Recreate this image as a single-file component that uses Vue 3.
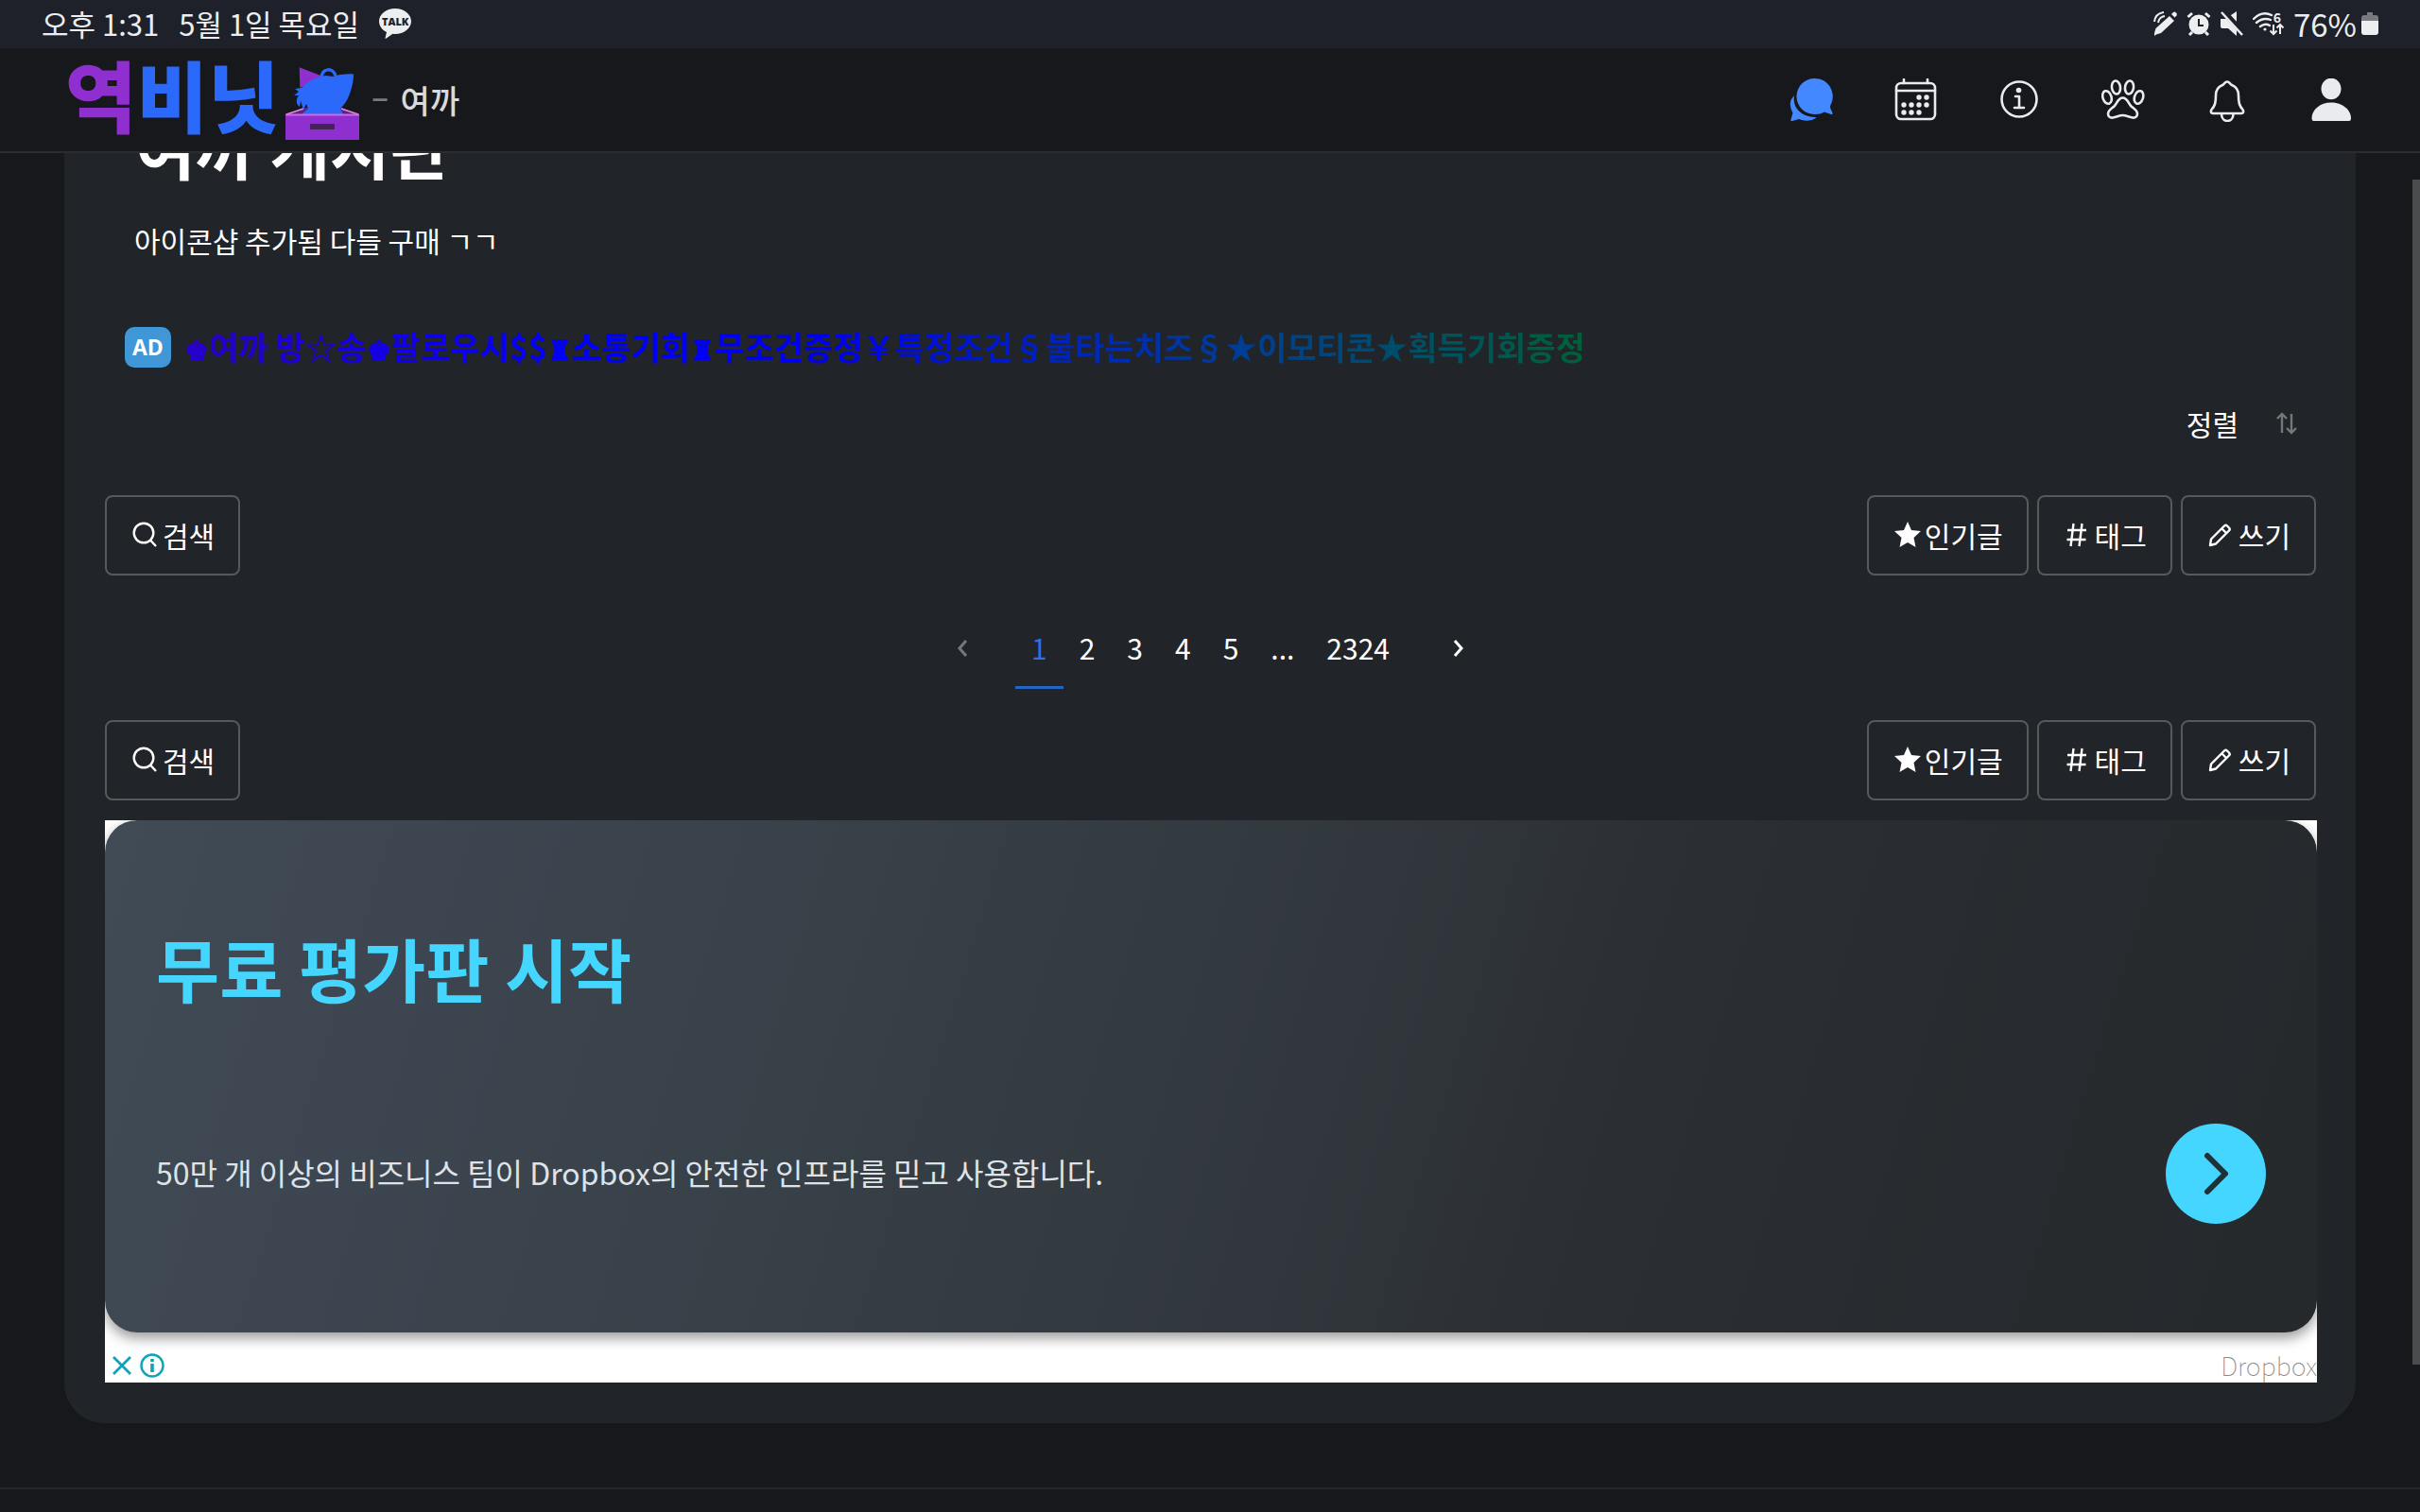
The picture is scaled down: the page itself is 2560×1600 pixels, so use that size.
<template>
  <div class="page">
    <div class="status-bar">
      <div class="status-left">
        <span>오후 1:31</span>
        <span>5월 1일 목요일</span>
        <span class="talk">
          <svg viewBox="0 0 34 32" width="34" height="32">
            <path fill="#eceef0" d="M17 0C7.600 0 0 6 0 13.500c0 5 3.300 9.200 8 11.500l-1.500 6.300c-.1.500.4.800.8.500l7.200-5c.8.100 1.700.200 2.500.200 9.400 0 17-6 17-13.500S26.400 0 17 0z" />
          </svg>
          <span class="talk-text">TALK</span>
        </span>
      </div>
      <div class="status-right">
        <svg viewBox="0 0 26 26" width="26" height="26" fill="#eceef0">
          <path d="M17 5l5 5L8 23l-5 1.500L1 26l0-3 1.500-5z" />
          <path d="M19 3l2-2q1.500-1 3 .5t.5 3l-2 2z" />
          <path d="M1 11Q2 2 11 1M5 12Q6 6 12 5" fill="none" stroke="#eceef0" stroke-width="2" />
        </svg>
        <svg viewBox="0 0 26 26" width="26" height="26">
          <circle cx="13" cy="14" r="10.500" fill="#eceef0" />
          <path d="M1.500 6L6 2M24.500 6L20 2M6 22l-3 3M20 22l3 3" stroke="#eceef0" stroke-width="3" />
          <path d="M13 8v7h5" fill="none" stroke="#1e2129" stroke-width="2" />
        </svg>
        <svg viewBox="0 0 26 26" width="26" height="26">
          <path d="M1 8h5l12-8v26l-9-8H3q-2 0-2-2z" fill="#eceef0" />
          <path d="M3-1l23 25" stroke="#1e2129" stroke-width="6" />
          <path d="M2 1l22 24" stroke="#eceef0" stroke-width="2.500" />
        </svg>
        <span class="wifi">
          <svg viewBox="0 0 34 26" width="34" height="26" fill="none" stroke="#eceef0" stroke-width="2.400">
            <path d="M1 8Q10-1 20 4M4 12q7-6 15-3M8 16q5-4 10-1" stroke-linecap="round" />
            <circle cx="13" cy="19" r="1.600" fill="#eceef0" stroke="none" />
            <path d="M22 14v10M18.500 20.500L22 24l3.500-3.500M29 24V14M25.500 17.500L29 14l3.500 3.500" stroke-width="2" />
          </svg>
          <span class="wifi-gen">6</span>
        </span>
        <span class="battery-text">76%</span>
        <svg viewBox="0 0 18 26" width="18" height="26">
          <path d="M6 1h6v3h3q3 0 3 3v3H0V7q0-3 3-3h3z" fill="#777a7f" />
          <path d="M0 10h18v12q0 3-3 3H3q-3 0-3-3z" fill="#eceef0" />
        </svg>
      </div>
    </div>

    <header class="header">
      <a class="logo" href="#" aria-label="역비닛">
        <span class="logo-text"><span class="logo-purple">역</span>비닛</span>
        <svg viewBox="0 0 78 78" width="78" height="78">
          <path d="M0 52L19 44h41l18 8z" fill="#58257f" />
          <path d="M1 51l18-6M77 51L59 45" stroke="#e58ae8" stroke-width="1.500" />
          <path d="M14.700 1.300L40 11 15.300 23z" fill="#8f2fd0" />
          <path d="M38 12C39 2 50 1 53 10" fill="none" stroke="#2b69fb" stroke-width="3.500" />
          <path fill="#2b69fb" d="M72 8.500C64 8 56 9 50 11L43 10C34 11 23 16 17 23L10 24L14 27L9 31L14 31C10 36 12 41 15 43L16 37L19 46L22 40L24 45C22 47 20 48 17 51H61L58 45C64 39 67 33 69 26C71 20 72 14 72 8.500Z" />
          <path d="M0 51.500h78V78H0z" fill="#8f2fd0" />
          <path d="M0 51.500h78" stroke="#d26be0" stroke-width="2" />
          <rect x="26" y="61" width="26" height="6" rx="1" fill="#432455" />
        </svg>
      </a>
      <span class="crumb-dash">–</span>
      <a class="crumb" href="#">여까</a>
      <nav class="nav">
        <button type="button" aria-label="채팅">
          <svg viewBox="0 0 46 46" width="46" height="46" fill="#4488ff">
            <path d="M26.500 0a19 19 0 0 1 17 28q-1 2 0 4l2 4.500q.500 2-1.500 1.500l-7-2.500q-4 2.500-10.500 2.500a19 19 0 0 1 0-38z" />
            <path d="M5 18q-1.500 10 5 16.500T27 41q2 0 1 1-6 4-15 2l-3-1-7 2q-2 .500-1.500-1.500l2-7Q-1 28 2 22z" />
          </svg>
        </button>
        <button type="button" aria-label="일정">
          <svg viewBox="0 0 46 46" width="46" height="46">
            <rect x="3" y="5" width="41" height="38" rx="5" fill="none" stroke="#e9ebef" stroke-width="2.600" />
            <path d="M11 5V1M36 5V1M3 13h41" stroke="#e9ebef" stroke-width="2.600" stroke-linecap="round" />
            <circle v-for="(d, i) in calendarDots" :key="i" :cx="d[0]" :cy="d[1]" r="2.700" fill="#e9ebef" />
          </svg>
        </button>
        <button type="button" aria-label="정보">
          <svg viewBox="0 0 46 46" width="46" height="46" fill="none" stroke="#e9ebef" stroke-width="2.600" stroke-linecap="round">
            <circle cx="23" cy="22" r="18.500" />
            <circle cx="22.500" cy="12.500" r="2.800" fill="#e9ebef" stroke="none" />
            <path d="M19 19h4v12M18 31h10" stroke-linejoin="round" />
          </svg>
        </button>
        <button type="button" aria-label="채널">
          <svg viewBox="0 0 46 46" width="46" height="46" fill="none" stroke="#e9ebef" stroke-width="2.600">
            <ellipse cx="15.500" cy="9.500" rx="4.500" ry="7" transform="rotate(-8 15.500 9.500)" />
            <ellipse cx="29.500" cy="9.500" rx="4.500" ry="7" transform="rotate(8 29.500 9.500)" />
            <ellipse cx="6" cy="20" rx="4.500" ry="7" transform="rotate(-18 6 20)" />
            <ellipse cx="39.500" cy="20" rx="4.500" ry="7" transform="rotate(18 39.500 20)" />
            <path d="M22.500 20.500c-5 0-6 6-9 9-3 2.500-6.500 4-6.500 8 0 3 2.500 4.500 5 4 4-.500 6.500-2.500 10.500-2.500s6.500 2 10.500 2.500c2.500.500 5-1 5-4 0-4-3.500-5.500-6.500-8-3-3-4-9-9-9z" />
          </svg>
        </button>
        <button type="button" aria-label="알림">
          <svg viewBox="0 0 46 46" width="46" height="46" fill="none" stroke="#e9ebef" stroke-width="2.600" stroke-linejoin="round">
            <path d="M23 3.500c-2.500 0-3 2.500-5 3.500-5 2-7 6-7 11 0 8-1 11-4.500 15-1.500 2-.500 4 1.500 4h30c2 0 3-2 1.500-4C36 29 35 26 35 18c0-5-2-9-7-11-2-1-2.500-3.500-5-3.500z" />
            <path d="M17 37.500c0 10 12.500 10 12.500 0" />
          </svg>
        </button>
        <button type="button" aria-label="내 계정">
          <svg viewBox="0 0 46 46" width="46" height="46" fill="#e9ebef">
            <ellipse cx="23" cy="11" rx="10.500" ry="11.300" />
            <path d="M2.500 42c0-9 9-16.500 20.500-16.500S44 33 44 42q0 3-2 3H4.500q-2 0-2-3z" />
          </svg>
        </button>
      </nav>
    </header>

    <main class="main">
      <article class="board">
        <h1 class="board-title">여까 게시판</h1>
        <p class="board-desc">아이콘샵 추가됨 다들 구매 ㄱㄱ</p>

        <a class="notice" href="#">
          <span class="ad-badge">AD</span>
          <span class="notice-text"><span class="piece">♚</span>여까 방☆송<span class="piece">♚</span>팔로우시$$<span class="piece">♜</span>소통기회<span class="piece">♜</span>무조건증정￥특정조건§불타는치즈§★이모티콘★획득기회증정</span>
        </a>

        <div class="sort">
          <button type="button" class="sort-btn">
            정렬
            <svg viewBox="0 0 22 24" width="22" height="24" fill="none" stroke="#75787b" stroke-width="2.400">
              <path d="M6 22V2M1 7l5-5 5 5M16 2v20M11 17l5 5 5-5" />
            </svg>
          </button>
        </div>

        <template v-for="row in 2" :key="row">
          <div class="toolbar">
            <button type="button" class="btn">
              <svg viewBox="0 0 30 30" width="30" height="30" fill="none" stroke="#fff" stroke-width="2.400">
                <circle cx="12" cy="13" r="10.300" />
                <path d="M19 20.500l6 6.500" />
              </svg>
              검색
            </button>
            <div class="btn-group">
              <button type="button" class="btn">
                <svg viewBox="0 0 30 30" width="30" height="30" fill="#fff">
                  <path d="M14 1l4 9 10 1-7.500 7 2 10L14 23l-8.500 5 2-10L0 11l10-1z" />
                </svg>
                인기글
              </button>
              <button type="button" class="btn">
                <svg viewBox="0 0 30 30" width="30" height="30" fill="none" stroke="#fff" stroke-width="2.400">
                  <path d="M9.500 3L6.500 27M18.500 3l-3 24M3 10h20M2.500 20h20" />
                </svg>
                태그
              </button>
              <button type="button" class="btn">
                <svg viewBox="0 0 30 30" width="30" height="30" fill="none" stroke="#fff" stroke-width="2.400" stroke-linejoin="round">
                  <path d="M3 19.500L17 5.500q1.500-1.500 3 0l2 2q1.500 1.500 0 3L8 24.500l-6 1.500zM14.500 8.500l4.500 4.500" />
                </svg>
                쓰기
              </button>
            </div>
          </div>

          <nav v-if="row === 1" class="pagination" aria-label="페이지">
            <button type="button" class="page-arrow disabled" disabled aria-label="이전">
              <svg viewBox="0 0 12 20" width="12" height="20"><path d="M10 2L3 10l7 8" /></svg>
            </button>
            <a
              v-for="p in pages"
              :key="p"
              href="#"
              class="page-link"
              :class="{ active: p === current }"
              @click.prevent="selectPage(p)"
            >{{ p }}</a>
            <button type="button" class="page-arrow" aria-label="다음">
              <svg viewBox="0 0 12 20" width="12" height="20"><path d="M2 2l7 8-7 8" /></svg>
            </button>
          </nav>
        </template>

        <section class="banner">
          <div class="banner-card">
            <h2>무료 평가판 시작</h2>
            <div class="banner-body">
              <p>50만 개 이상의 비즈니스 팀이 Dropbox의 안전한 인프라를 믿고 사용합니다.</p>
              <button type="button" class="banner-go" aria-label="열기">
                <svg viewBox="0 0 40 52" width="40" height="52">
                  <path d="M11 7l19 19-19 19" fill="none" stroke="#1f3138" stroke-width="6" stroke-linecap="round" stroke-linejoin="round" />
                </svg>
              </button>
            </div>
          </div>
          <div class="banner-foot">
            <div class="banner-marks">
              <button type="button" aria-label="닫기">
                <svg viewBox="0 0 22 26" width="22" height="26"><path d="M2 4l18 18M20 4L2 22" stroke="#0fa3b8" stroke-width="2.800" /></svg>
              </button>
              <button type="button" aria-label="광고 정보">
                <svg viewBox="0 0 26 26" width="26" height="26" fill="none" stroke="#0fa3b8">
                  <circle cx="13" cy="13" r="11.500" stroke-width="2.400" />
                  <path d="M13 11v9M13 6v3" stroke-width="3.600" />
                </svg>
              </button>
            </div>
            <span class="advertiser">Dropbox</span>
          </div>
        </section>
      </article>
    </main>

    <footer class="footer"></footer>
    <div class="scroll-thumb"></div>
  </div>
</template>

<script setup>
import { ref } from 'vue';

const current = ref('1');
const pages = ['1', '2', '3', '4', '5', '...', '2324'];

const calendarDots = [
  [27, 20], [35, 20],
  [11, 28], [19, 28], [27, 28], [35, 28],
  [11, 36], [19, 36], [27, 36]
];

const selectPage = (p) => {
  if (p !== '...') {
    current.value = p;
  }
};
</script>

<style>
body {
  background: #17181c;
}
</style>

<style scoped>
.page {
  position: relative;
  min-height: 100vh;
  display: flex;
  flex-direction: column;
  overflow: hidden;
  background: #17181c;
  color: #fff;
  font-family: "Noto Sans CJK KR", sans-serif;
  font-size: 30px;
  line-height: 44px;
}

.page * {
  box-sizing: border-box;
}

svg {
  display: block;
  flex: none;
}

a {
  color: inherit;
  text-decoration: none;
}

button {
  margin: 0;
  padding: 0;
  background: none;
  border: none;
  color: inherit;
  font: inherit;
  cursor: pointer;
}

.status-bar {
  height: 51px;
  padding: 0 44px 2px;
  display: flex;
  justify-content: space-between;
  align-items: center;
  background: #1e2129;
  color: #eceef0;
}

.status-left {
  display: flex;
  align-items: center;
  gap: 21px;
  font-size: 31px;
}

.talk {
  position: relative;
}

.talk-text {
  position: absolute;
  top: 0;
  left: 0;
  width: 100%;
  text-align: center;
  color: #1e2129;
  font-family: "Open Sans", sans-serif;
  font-size: 11px;
  font-weight: 800;
  line-height: 28px;
}

.status-right {
  display: flex;
  align-items: center;
  gap: 9px;
}

.wifi {
  position: relative;
}

.wifi-gen {
  position: absolute;
  top: 0;
  right: 4px;
  font-size: 14px;
  font-weight: 700;
  line-height: 12px;
}

.battery-text {
  margin-right: -4px;
  font-size: 33px;
}

.header {
  height: 111px;
  padding: 0 71px 0 69px;
  display: flex;
  align-items: center;
  border-bottom: 2px solid #2b2d31;
  background: #17181c;
  z-index: 1;
}

.logo {
  display: flex;
  align-items: center;
  gap: 7px;
}

.logo-text {
  padding-bottom: 13px;
  color: #2b69fb;
  font-size: 82px;
  font-weight: 900;
  line-height: 92px;
}

.logo-purple {
  color: #8f2fd0;
}

.logo svg {
  margin-top: 6px;
}

.crumb-dash {
  margin: 0 12px;
  color: #77797c;
  font-family: Roboto, sans-serif;
  font-weight: 500;
}

.crumb {
  color: #d9dadc;
  font-size: 34px;
  font-weight: 500;
}

.nav {
  margin-left: auto;
  display: flex;
  gap: 64px;
}

.main {
  flex: 1;
  padding: 0 68px 67px;
}

.board {
  margin-top: -48px;
  padding: 0 41px 43px 43px;
  border-radius: 0 0 42px 42px;
  background: #212428;
}

.board-title {
  margin: 0 0 36px;
  padding-left: 32px;
  font-size: 69px;
  font-weight: 700;
  line-height: 82px;
}

.board-desc {
  margin: 0;
  padding-left: 31px;
}

.notice {
  height: 44px;
  margin-top: 69px;
  padding-left: 21px;
  display: flex;
  align-items: center;
  gap: 14px;
}

.ad-badge {
  padding: 0 8px;
  border-radius: 10px;
  background: #3f97d8;
  font-family: "Open Sans", sans-serif;
  font-size: 23px;
  font-weight: 700;
  line-height: 43px;
}

.notice-text {
  background: linear-gradient(90deg, #2800c8 0%, #0000ff 28%, #0000f0 45%, #003c96 75%, #006038 100%);
  background-clip: text;
  -webkit-background-clip: text;
  color: transparent;
  font-size: 34px;
  font-weight: 700;
}

.piece {
  font-size: 29px;
}

.sort {
  margin: 37px 0 54px;
  padding-right: 21px;
  display: flex;
  justify-content: flex-end;
}

.sort-btn {
  display: flex;
  align-items: center;
  gap: 40px;
}

.toolbar {
  padding-right: 1px;
  display: flex;
  justify-content: space-between;
}

.btn-group {
  display: flex;
  gap: 9px;
}

.btn {
  height: 85px;
  padding: 0 25px 2px 27px;
  display: flex;
  align-items: center;
  gap: 2px;
  border: 2px solid #575a5d;
  border-radius: 8px;
}

.pagination {
  margin: 36px 0 33px;
  padding-right: 1px;
  display: flex;
  justify-content: center;
}

.page-link {
  padding: 0 17px;
  border-bottom: 3px solid transparent;
  line-height: 81px;
}

.page-link.active {
  border-color: #2466c4;
  color: #2f6fe0;
}

.page-arrow {
  width: 112px;
  height: 81px;
  display: flex;
  align-items: center;
  justify-content: center;
}

.page-arrow path {
  fill: none;
  stroke: #fff;
  stroke-width: 3;
}

.page-arrow.disabled path {
  stroke: #75787b;
}

.banner {
  margin-top: 21px;
  overflow: hidden;
  background: #fff;
}

.banner-card {
  height: 542px;
  padding: 102px 54px 0;
  border-radius: 34px;
  background: linear-gradient(107deg, #404b55 0%, #3d4550 15%, #384048 32%, #32393f 50%, #2f3439 60%, #2b2e32 68%, #282b2f 80%, #25292c 100%);
  box-shadow: 0 6px 14px rgba(0, 0, 0, 0.4);
}

.banner-card h2 {
  margin: 0 0 113px;
  color: #44d6ff;
  font-size: 73px;
  font-weight: 700;
  line-height: 106px;
}

.banner-body {
  display: flex;
  align-items: center;
  justify-content: space-between;
}

.banner-body p {
  margin: 0;
  padding-bottom: 4px;
  color: #dfe3e8;
  font-size: 32px;
}

.banner-go {
  width: 106px;
  height: 106px;
  display: flex;
  align-items: center;
  justify-content: center;
  border-radius: 50%;
  background: #44d6ff;
}

.banner-foot {
  height: 53px;
  padding: 16px 0 0 7px;
  display: flex;
  align-items: center;
  justify-content: space-between;
}

.banner-marks {
  display: flex;
  gap: 8px;
}

.advertiser {
  color: #8c8c8c;
  font-size: 27px;
  font-weight: 100;
  line-height: 36px;
}

.footer {
  height: 26px;
  border-top: 2px solid #26272b;
}

.scroll-thumb {
  position: absolute;
  top: 190px;
  right: 0;
  bottom: 156px;
  width: 8px;
  background: #4b4c4e;
}
</style>
